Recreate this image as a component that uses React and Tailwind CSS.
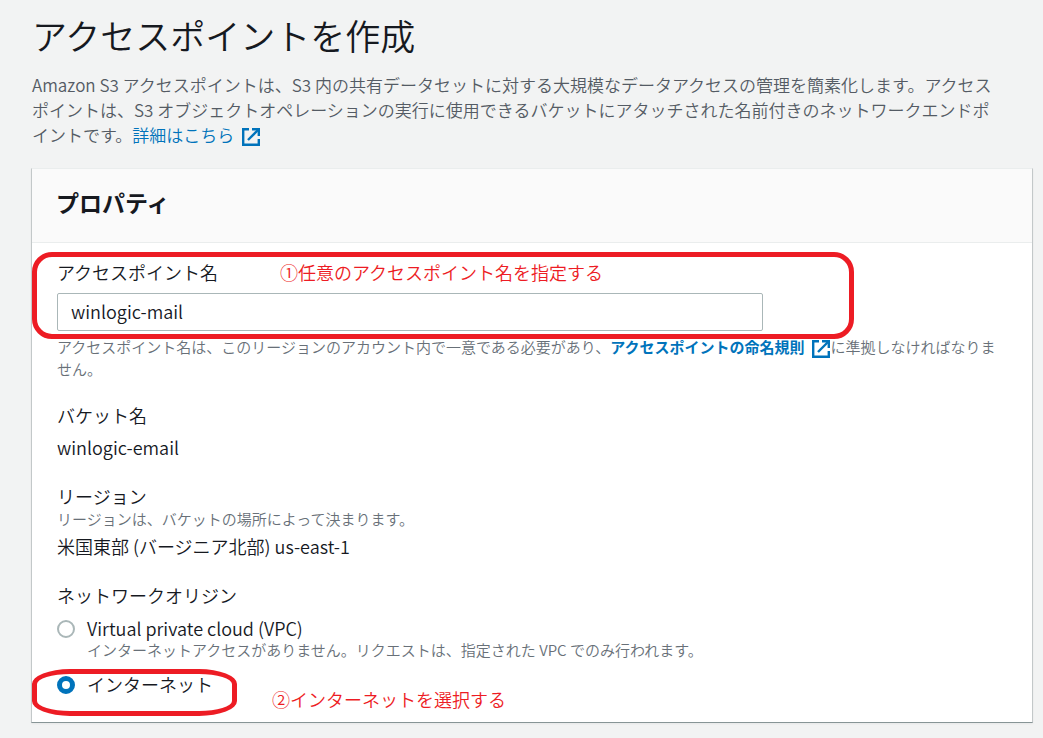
function ExternalIcon({ className }) {
  return (
    <svg
      viewBox="0 0 18 18"
      fill="none"
      stroke="currentColor"
      strokeWidth="2.4"
      className={className}
      aria-hidden="true"
    >
      <path d="M7 1.2H1.2V16.8H16.8V11" />
      <path d="M10 1.2H16.8V8" />
      <path d="M16.5 1.5L6 12" />
    </svg>
  );
}

function NetworkOption({ id, label, description, defaultChecked }) {
  return (
    <div className="flex gap-3">
      <input
        id={id}
        type="radio"
        name="networkOrigin"
        defaultChecked={defaultChecked}
        className="mt-[3px] size-[18px] shrink-0 appearance-none rounded-full border-2 border-[#aab7b8] bg-white checked:border-[5px] checked:border-[#0073bb]"
      />
      <div>
        <label htmlFor={id} className="block text-lg leading-[22px]">
          {label}
        </label>
        {description && (
          <p className="text-[15px] leading-[22px] text-[#687078]">
            {description}
          </p>
        )}
      </div>
    </div>
  );
}

function App() {
  return (
    <main className="min-h-screen bg-[#f2f3f3] pt-[11px] pr-[11px] pb-4 pl-8 font-['Noto_Sans_CJK_JP',sans-serif] font-[350] text-[#16191f]">
      <h1 className="text-[35px] leading-[48px]">アクセスポイントを作成</h1>

      <p className="mt-[13px] text-[17px] leading-[25px] text-[#545b64]">
        Amazon S3 アクセスポイントは、S3 内の共有データセットに対する大規模なデータアクセスの管理を簡素化します。アクセス
        <br />
        ポイントは、S3 オブジェクトオペレーションの実行に使用できるバケットにアタッチされた名前付きのネットワークエンドポ
        <br />
        イントです。
        <a href="#details" className="text-[#0073bb]">
          詳細はこちら
          <ExternalIcon className="ml-2 inline size-[18px]" />
        </a>
      </p>

      <section className="-mx-px mt-[21px] border border-t-[#eaeded] border-r-[#c3c8c9] border-b-[#879596] border-l-[#c3c8c9] bg-white shadow-xs">
        <header className="border-b border-[#eaeded] bg-[#fafafa] px-6 pt-[17px] pb-6">
          <h2 className="text-[23px] leading-8 font-bold">プロパティ</h2>
        </header>

        <form className="px-[25px] pt-[17px] pb-[27px]">
          <div className="relative">
            <label htmlFor="accessPointName" className="block text-lg leading-6">
              アクセスポイント名
            </label>
            <input
              id="accessPointName"
              type="text"
              defaultValue="winlogic-mail"
              className="mt-[9px] block h-[38px] w-full max-w-[706px] rounded-xs border border-[#aab7b8] bg-white px-[13px] pb-[2px] text-lg"
            />
            <div className="pointer-events-none absolute -top-2 -left-[25px] h-[87px] w-[822px] rounded-[20px] border-5 border-[#ed1c24]" />
            <p className="absolute top-0 left-[223px] text-lg leading-6 whitespace-nowrap text-[#ed1c24]">
              ①任意のアクセスポイント名を指定する
            </p>
          </div>

          <p className="mt-[5px] text-[15px] leading-[22px] text-[#687078]">
            アクセスポイント名は、このリージョンのアカウント内で一意である必要があり、
            <a href="#naming" className="font-bold text-[#0073bb]">
              アクセスポイントの命名規則
              <ExternalIcon className="ml-2 inline size-[18px]" />
            </a>
            に準拠しなければなりません。
          </p>

          <h3 className="mt-[23px] text-lg leading-6">バケット名</h3>
          <p className="mt-2 text-lg leading-6">winlogic-email</p>

          <h3 className="mt-[25px] text-lg leading-6">リージョン</h3>
          <p className="text-[15px] leading-[22px] text-[#687078]">
            リージョンは、バケットの場所によって決まります。
          </p>
          <p className="mt-1 text-lg leading-6">
            米国東部 (バージニア北部) us-east-1
          </p>

          <fieldset className="relative mt-[25px]">
            <legend className="mb-[10px] text-lg leading-6">
              ネットワークオリジン
            </legend>
            <div className="flex flex-col gap-3">
              <NetworkOption
                id="originVpc"
                label="Virtual private cloud (VPC)"
                description="インターネットアクセスがありません。リクエストは、指定された VPC でのみ行われます。"
              />
              <NetworkOption
                id="originInternet"
                label="インターネット"
                defaultChecked
              />
            </div>
            <div className="pointer-events-none absolute -bottom-[21px] -left-[25px] h-[47px] w-[205px] rounded-[38px/15px] border-5 border-[#ed1c24]" />
            <p className="absolute -bottom-4 left-[215px] text-lg leading-6 text-[#ed1c24]">
              ②インターネットを選択する
            </p>
          </fieldset>
        </form>
      </section>
    </main>
  );
}

export default App;
